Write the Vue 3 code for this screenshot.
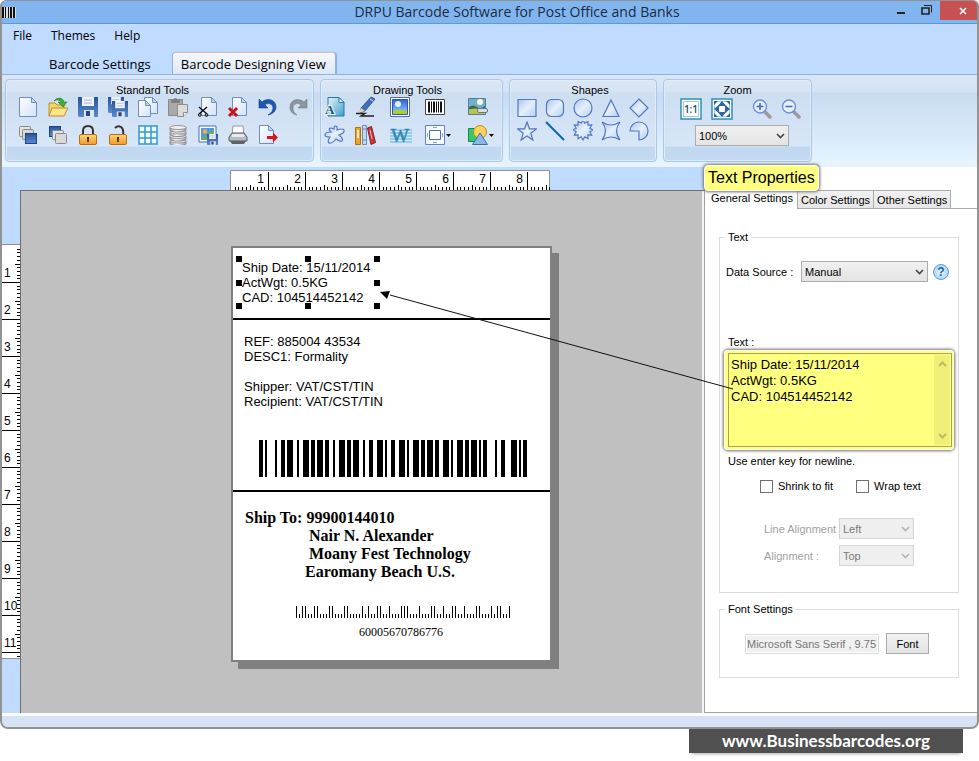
<script setup>
import { ref } from 'vue'

const page = (x, y, w, h) =>
  `<path d="M${x} ${y}h${w - 5}l5 5v${h - 5}h-${w}z" fill="url(#gPage)" stroke="#6f8fc0"/>` +
  `<path d="M${x + w - 5} ${y}v5h5z" fill="#c3d6f0" stroke="#6f8fc0" stroke-linejoin="round"/>`

const floppy = (x, y, s) =>
  `<g transform="translate(${x} ${y}) scale(${s / 20})"><path d="M0 0h20v20h-19l-1-1z" fill="url(#gBlue)"/>` +
  '<path d="M4 0h12v9h-12z" fill="#eef3fb"/><path d="M6 3h8M6 6h8" stroke="#a9b9d6"/>' +
  '<path d="M6 13h10v7h-10z" fill="#dfe5ef"/><path d="M8 14h4v5h-4z" fill="#24457e"/></g>'

const lockBody =
  '<rect x="1.500" y="9.500" width="17" height="10" rx="1.500" fill="url(#gGold)" stroke="#b86f10"/>' +
  '<path d="M10 12v5M9 13h2" stroke="#3a2200" stroke-width="1.600"/>'

const shapeStyle = 'fill="url(#gShape)" stroke="#5577bd" stroke-width="1.200"'

const standardTools = [
  { name: 'New', art: page(1.5, 0.5, 17, 19) },
  {
    name: 'Open',
    art:
      '<path d="M1 19V6h6l2 2h7v3" fill="#f3d469" stroke="#b8902c"/>' +
      '<path d="M1 19l3-8h16l-4 8z" fill="#ffe48a" stroke="#b8902c" stroke-linejoin="round"/>' +
      '<path d="M6 4c3-4 9-4 10 1h3l-4 5-5-5h3c-1-2-4-3-7-1z" fill="#3fae3a" stroke="#237d24" stroke-width=".6"/>',
  },
  { name: 'Save', art: floppy(0, 0, 20) },
  { name: 'Save all', art: floppy(0, 0, 16) + floppy(4, 4, 16) },
  { name: 'Copy', art: page(6.5, 0.5, 13, 16) + page(0.5, 3.5, 12, 16) },
  {
    name: 'Paste',
    art:
      '<path d="M.5 2.500h14v16h-14z" fill="#a9a9a9" stroke="#8a8a8a"/><path d="M3 3h2q2-4 5 0h2v3h-9z" fill="#7f7f7f"/>' +
      '<path d="M9.500 7.500h10v8l-4 4h-6z" fill="#dcdcdc" stroke="#8d8d8d"/><path d="M19.500 15.500h-4v4" fill="#f4f4f4" stroke="#8d8d8d"/>',
  },
  {
    name: 'Cut',
    art:
      page(3.5, 0.5, 15, 18) +
      '<path d="M1 10l8 7M9 10l-8 7" stroke="#111" stroke-width="1.400"/>' +
      '<circle cx="1.800" cy="18" r="1.400" fill="none" stroke="#111"/><circle cx="8.500" cy="18" r="1.400" fill="none" stroke="#111"/>',
  },
  { name: 'Delete', art: page(4.5, 0.5, 14, 18) + '<path d="M1 11l8 8M9 11l-8 8" stroke="#cc1417" stroke-width="3"/>' },
  {
    name: 'Undo',
    art: '<path d="M1 2v9h9l-3-3c3-3 8-1 8 3 0 3-2 5-5 7 5-1 8-4 8-8 0-7-8-10-14-5z" fill="#1f57b0" stroke="#123f8c" stroke-width=".6"/>',
  },
  {
    name: 'Redo',
    art: '<path d="M19 2v9h-9l3-3c-3-3-8-1-8 3 0 3 1 5 4 7-5-1-7-4-7-8 0-7 8-10 14-5z" fill="#8e959c" stroke="#777e86" stroke-width=".6"/>',
  },
  {
    name: 'Bring to front',
    art:
      '<rect x="1.500" y="1.500" width="11" height="10" rx="1" fill="#e3e3e3" stroke="#8a8a8a"/>' +
      '<rect x="4.500" y="4.500" width="11" height="10" rx="1" fill="#d6d6d6" stroke="#8a8a8a"/>' +
      '<rect x="7.500" y="8.500" width="11" height="10" fill="url(#gBlue)" stroke="#1d4585"/>',
  },
  {
    name: 'Send to back',
    art:
      '<rect x="1.500" y="1.500" width="11" height="10" fill="url(#gBlue)" stroke="#1d4585"/>' +
      '<rect x="4.500" y="5.500" width="11" height="9" rx="1" fill="#e3e3e3" stroke="#8a8a8a"/>' +
      '<rect x="7.500" y="8.500" width="11" height="10" rx="1" fill="#d9d9d9" stroke="#8a8a8a"/>',
  },
  { name: 'Lock', art: '<path d="M5 10V6q0-5 5-5t5 5v4" fill="none" stroke="#333" stroke-width="2"/>' + lockBody },
  { name: 'Unlock', art: '<path d="M7 3q3-3 6-1 3 2 2 8" fill="none" stroke="#333" stroke-width="2"/>' + lockBody },
  {
    name: 'Grid',
    art:
      '<path d="M1 1h18v18h-18z" fill="#f2fbff" stroke="#2e9bc9" stroke-width="1.500"/>' +
      '<path d="M7 1v18M13 1v18M1 7h18M1 13h18" stroke="#2e9bc9" stroke-width="1.500"/>',
  },
  {
    name: 'Database',
    art: [14, 9.5, 5, 0.5]
      .map(
        (y) =>
          `<path d="M2 ${y + 2}v2.500q0 2 8 2t8-2v-2.500" fill="url(#gSilver)" stroke="#8b8b93"/>` +
          `<ellipse cx="10" cy="${y + 2}" rx="8" ry="2" fill="#f2eef2" stroke="#99959c"/>`
      )
      .join(''),
  },
  {
    name: 'Save image',
    art:
      '<path d="M1 1h17v16h-17z" fill="#fff" stroke="#3f6fb5"/><path d="M3 3h13v12h-13z" fill="#4d9be8"/>' +
      '<circle cx="7" cy="6.500" r="2.200" fill="#ffa92e"/><path d="M3 15q4-6 8-3v3zM11 6q3 1 5 0v5h-5z" fill="#6fb636"/>' +
      floppy(9, 9, 11),
  },
  {
    name: 'Print',
    art:
      '<path d="M5 1h10l1 9h-12z" fill="#fff" stroke="#999"/><path d="M1 12l3-4h12l3 4v4h-18z" fill="#b8bcc2" stroke="#555b63"/>' +
      '<path d="M4 9h12v3h-12z" fill="#e7eaee"/><path d="M2 16h16l-2 3h-12z" fill="#5e646c"/>',
  },
  { name: 'Export', art: page(1.5, 0.5, 14, 18) + '<path d="M9 11h6V7.500l5 5-5 5V14h-6z" fill="#d8161a"/>' },
]

const drawingTools = [
  {
    name: 'Text',
    art:
      '<path d="M3 .5h11l5 5v13.500h-16z" fill="url(#gTeal)" stroke="#28789f"/><path d="M14 .5v5h5z" fill="#e9f6fc" stroke="#28789f"/>' +
      '<text x="0" y="17" font-family="Liberation Serif, serif" font-size="13" font-weight="700" fill="#17506f" stroke="#eaf6fb" stroke-width="2" paint-order="stroke">A</text>',
  },
  {
    name: 'Pencil',
    art:
      '<path d="M16 0l4 2-10 12-5 2 1-5z" fill="#3e6fba" stroke="#22427c" stroke-width=".7"/><path d="M15 2l3 2" stroke="#dfe8f7"/>' +
      '<path d="M6 11l-2 5 6-2z" fill="#e9d2a5"/><path d="M1 16.500h9l-4 2.500h13" fill="none" stroke="#222" stroke-width="1.400"/>',
  },
  {
    name: 'Picture',
    art:
      '<path d="M.5.5h19v19h-19z" fill="#fff" stroke="#5a68b3"/><path d="M2.500 2.500h15v15h-15z" fill="url(#gSky)" stroke="#2f57a8"/>' +
      '<circle cx="8" cy="7" r="3" fill="#fff" opacity=".85"/><path d="M3 14q6-3 14 0v3h-14z" fill="#a9cf35"/>',
  },
  {
    name: 'Barcode',
    art:
      '<path d="M.5 2.500h19v15h-19z" fill="#fff" stroke="#444"/>' +
      '<path d="M3 4.500h2v11h-2zM6 4.500h1v11h-1zM8 4.500h2v11h-2zM11 4.500h1v11h-1zM13 4.500h1v11h-1zM15 4.500h2v11h-2z" fill="#111"/>',
  },
  {
    name: 'Image library',
    art:
      '<path d="M.5 1.500h17v16h-17z" fill="#6fb0cf" stroke="#4d7f9c"/><circle cx="12" cy="5" r="3" fill="#fff7cf"/>' +
      '<path d="M1 10q5-3 8 0t8-1v3H1z" fill="#3d6c3e"/><path d="M1 13q5-3 16 0v4H1z" fill="#b6c64c"/>' +
      '<rect x="9.500" y="11.500" width="10" height="4" rx="1.500" fill="#d9dde6" stroke="#6c7487"/>',
  },
  {
    name: 'Freeform',
    art: '<path d="M10 1q3 0 2 4 6-2 7 0 1 3-5 5 5 4 3 6-2 1-6-2-4 5-7 4-2-2 1-6-5 0-5-2 0-3 6-3-3-3-1-4 2 0 4 1 0-3 1-3z" fill="url(#gShape)" stroke="#5577bd" stroke-width="1.200"/>',
  },
  {
    name: 'Library',
    art:
      '<path d="M.5 2.500h5v17h-5z" fill="#f2a325" stroke="#b36f0b"/><path d="M2 5h2v8h-2z" fill="#fff0c6"/>' +
      '<path d="M7.500.5h4v19h-4z" fill="#c4d5f0" stroke="#6c8cbe"/><path d="M8 4h3M8 15h3" stroke="#6c8cbe"/>' +
      '<path d="M12.500 3l4-1.500 4 16-4.500 2z" fill="#c8373a" stroke="#8d1b20"/><path d="M15 5l2 9" stroke="#f3b8b8"/>',
  },
  {
    name: 'Watermark',
    art:
      '<path d="M0 5h22M0 8h22M0 11h22M0 14h22M0 17h22" stroke="#55b5dc"/>' +
      '<text x="1" y="17" font-family="Liberation Serif, serif" font-size="19" fill="#2f86b4" stroke="#2f86b4" stroke-width=".5">W</text>',
  },
  {
    name: 'Page frame',
    caret: true,
    art:
      '<path d="M.5.500h19v19h-19z" fill="#f6faff" stroke="#5f83c2"/><path d="M4.500 5.500h11v9h-11z" fill="#fff" stroke="#4a70b4"/>' +
      '<path d="M8 2.500h4M8 17.500h4M2.500 8v4M17.500 8v4" stroke="#8aa3cf"/>',
  },
  {
    name: 'Insert shape',
    caret: true,
    art:
      '<path d="M.5 3.500h10v13h-10z" fill="#35c96f" stroke="#168a45"/><circle cx="12" cy="7" r="6.500" fill="#fbd25a" stroke="#bd8b1d"/>' +
      '<path d="M12 8l7.500 11.500h-15z" fill="#8ab7ea" stroke="#3a6db8"/>',
  },
]

const burst = (cx, cy, n, outer, inner) =>
  Array.from({ length: n * 2 }, (_, i) => {
    const r = i % 2 ? inner : outer
    const a = (Math.PI * i) / n - Math.PI / 2
    return `${(cx + r * Math.cos(a)).toFixed(1)},${(cy + r * Math.sin(a)).toFixed(1)}`
  }).join(' ')

const shapes = [
  { name: 'Rectangle', art: `<path d="M1 1.500h18v17h-18z" ${shapeStyle}/>` },
  { name: 'Rounded rectangle', art: `<rect x="1.500" y="1.500" width="17" height="17" rx="5" ${shapeStyle}/>` },
  { name: 'Ellipse', art: `<circle cx="10" cy="10" r="9" ${shapeStyle}/>` },
  { name: 'Triangle', art: `<path d="M10 2l8 16.500h-16z" ${shapeStyle}/>` },
  { name: 'Diamond', art: `<path d="M10 1l9 9-9 9-9-9z" ${shapeStyle}/>` },
  { name: 'Star', art: `<polygon points="${burst(10, 11, 5, 10, 4)}" ${shapeStyle}/>` },
  { name: 'Line', art: '<path d="M1 1l18 18" stroke="#0d66a6" stroke-width="2"/>' },
  { name: 'Burst', art: `<polygon points="${burst(10, 9, 12, 10, 7)}" ${shapeStyle}/>` },
  { name: 'Four point star', art: `<path d="M1 1q9 6 18 0-7 9 0 18-9-6-18 0 7-9 0-18z" ${shapeStyle}/>` },
  { name: 'Pie', art: `<path d="M1 10a9 9 0 1 1 9 9v-9z" ${shapeStyle}/>` },
]

const magnifier = (sign) =>
  '<g transform="translate(2 1)"><path d="M12 12l6 6" stroke="#9b9b9b" stroke-width="3.500" stroke-linecap="round"/>' +
  '<circle cx="8" cy="7.500" r="6.500" fill="#e6eefc" stroke="#6c8fd6" stroke-width="1.400"/>' +
  `<path d="${sign}" stroke="#3f6dc4" stroke-width="1.600"/></g>`

const zoomTools = [
  {
    name: 'Actual size',
    art:
      '<path d="M1 1h20v20h-20z" fill="#fff" stroke="#2f8fb9" stroke-width="1.500"/><path d="M3.500 3.500h15v15h-15z" fill="#fff" stroke="#7fc1dd" stroke-width=".8"/>' +
      '<text x="11" y="15" text-anchor="middle" font-family="Open Sans, sans-serif" font-size="10" font-weight="600" fill="#1d4e6e">1:1</text>',
  },
  {
    name: 'Fit to window',
    art:
      '<path d="M1 1h20v20h-20z" fill="#fff" stroke="#2f8fb9" stroke-width="1.500"/><path d="M3.500 3.500h15v15h-15z" fill="#fff" stroke="#7fc1dd" stroke-width=".8"/>' +
      '<path d="M3 3h4l-4 4zM19 3h-4l4 4zM3 19h4l-4-4zM19 19h-4l4-4z" fill="#2d62ad"/>' +
      '<path d="M11 3l3 3.500 1.500 1.500 3.500 3-3.500 3-1.500 1.500-3 3.500-3-3.500-1.500-1.500-3.500-3 3.500-3 1.500-1.500z" fill="#2d62ad"/><rect x="8" y="8" width="6" height="6" rx="1" fill="#fff"/>',
  },
  { name: 'Zoom in', art: magnifier('M8 4v7M4.500 7.500h7') },
  { name: 'Zoom out', art: magnifier('M4.500 7.500h7') },
]

/* Bars of the linear code as [start, width] in 2px modules */
const bars = [
  [0, 2], [3, 1], [8, 1], [11, 2], [14, 3], [19, 1], [22, 3], [26, 2], [29, 3], [33, 2],
  [37, 1], [40, 3], [44, 2], [47, 3], [52, 1], [55, 2], [59, 3], [63, 1], [66, 2], [70, 3],
  [74, 1], [77, 3], [81, 2], [84, 3], [88, 2], [92, 3], [96, 1], [99, 3], [103, 2], [106, 3],
  [110, 1], [112, 2], [118, 1], [121, 2], [126, 3], [130, 1], [132, 2],
]

/* POSTNET: a tall frame bar, five bars per digit, a tall frame bar */
const postnetDigits = ['11000', '00011', '00101', '00110', '01001', '01010', '01100', '10001', '10010', '10100']
const postalCode = '60005670786776'
const postnet = ('1' + [...postalCode].map((d) => postnetDigits[d]).join('') + '1').split('')

const unit = 37
const ticks = (count) =>
  Array.from({ length: count }, (_, i) => i + 1).map((i) => ({
    at: Math.round((i * unit) / 10),
    size: i % 10 === 0 ? 18 : i % 5 === 0 ? 5 : 3,
  }))
const topTicks = ticks(86)
const sideTicks = ticks(111)

const shipTo = `Ship To: 99900144010
                Nair N. Alexander
                Moany Fest Technology
               Earomany Beach U.S.`

const activeView = ref('Barcode Designing View')
const activePanel = ref('General Settings')
const zoom = ref('100%')
const source = ref('Manual')
const labelText = ref('Ship Date: 15/11/2014\nActWgt: 0.5KG\nCAD: 104514452142')
const shrink = ref(false)
const wrap = ref(false)
</script>

<template>
  <div class="shell">
    <svg class="defs" width="0" height="0" aria-hidden="true">
      <defs>
        <linearGradient id="gPage" x1="0" y1="0" x2="1" y2="1"><stop offset="0" stop-color="#fff" /><stop offset="1" stop-color="#d3e2f7" /></linearGradient>
        <linearGradient id="gBlue" x1="0" y1="0" x2="0" y2="1"><stop offset="0" stop-color="#27539c" /><stop offset="1" stop-color="#5b8bcb" /></linearGradient>
        <linearGradient id="gGold" x1="0" y1="0" x2="0" y2="1"><stop offset="0" stop-color="#ffd27a" /><stop offset="1" stop-color="#f39a26" /></linearGradient>
        <linearGradient id="gSilver" x1="0" y1="0" x2="1" y2="0"><stop offset="0" stop-color="#9d9da5" /><stop offset=".4" stop-color="#fff" /><stop offset="1" stop-color="#a29da5" /></linearGradient>
        <linearGradient id="gTeal" x1="0" y1="0" x2="1" y2="1"><stop offset="0" stop-color="#e4f5fc" /><stop offset="1" stop-color="#3f9fc9" /></linearGradient>
        <linearGradient id="gSky" x1="0" y1="0" x2="0" y2="1"><stop offset="0" stop-color="#2765d8" /><stop offset="1" stop-color="#9fd2ff" /></linearGradient>
        <linearGradient id="gShape" x1="0" y1="0" x2="1" y2="1"><stop offset="0" stop-color="#a9c5ee" /><stop offset=".5" stop-color="#e6effb" /><stop offset="1" stop-color="#b3cdf0" /></linearGradient>
      </defs>
    </svg>

    <main class="window">
      <header class="titlebar">
        <svg class="app-icon" width="14" height="11" viewBox="0 0 14 11" aria-hidden="true">
          <path d="M0 0h14v11h-14z" fill="#ddd" />
          <path d="M0 0h2v11h-2zM3 0h1v11h-1zM6 0h1v11h-1zM8 0h2v11h-2zM11 0h2v11h-2z" fill="#111" />
        </svg>
        <h1>DRPU Barcode Software for Post Office and Banks</h1>
        <div class="controls">
          <button type="button" aria-label="Minimize"><svg width="10" height="12" viewBox="0 0 10 12"><path d="M1 9h8" stroke="#222" stroke-width="2" /></svg></button>
          <button type="button" aria-label="Restore"><svg width="12" height="12" viewBox="0 0 12 12"><path d="M1 4h7v6h-7z" fill="none" stroke="#222" stroke-width="1.600" /><path d="M3 1.500h7.500v7" fill="none" stroke="#222" /></svg></button>
          <button type="button" class="close" aria-label="Close"><svg width="8" height="8" viewBox="0 0 8 8"><path d="M1 1l6 6M7 1l-6 6" stroke="#fff" stroke-width="1.600" /></svg></button>
        </div>
      </header>

      <nav class="menu">
        <button type="button">File</button>
        <button type="button">Themes</button>
        <button type="button">Help</button>
      </nav>

      <nav class="views">
        <button
          v-for="view in ['Barcode Settings', 'Barcode Designing View']"
          :key="view"
          type="button"
          :class="{ active: view === activeView }"
          @click="activeView = view"
        >{{ view }}</button>
      </nav>

      <section class="ribbon">
        <div class="group standard">
          <h2>Standard Tools</h2>
          <div class="tools">
            <button v-for="t in standardTools" :key="t.name" type="button" :aria-label="t.name">
              <svg width="20" height="20" viewBox="0 0 20 20" v-html="t.art"></svg>
            </button>
          </div>
        </div>
        <div class="group drawing">
          <h2>Drawing Tools</h2>
          <div class="tools">
            <button v-for="t in drawingTools" :key="t.name" type="button" :aria-label="t.name">
              <svg class="glyph" width="20" height="20" viewBox="0 0 20 20" v-html="t.art"></svg>
              <svg v-if="t.caret" width="5" height="3" viewBox="0 0 5 3"><path d="M0 0h5l-2.500 3z" fill="#000" /></svg>
            </button>
          </div>
        </div>
        <div class="group shapes">
          <h2>Shapes</h2>
          <div class="tools">
            <button v-for="t in shapes" :key="t.name" type="button" :aria-label="t.name">
              <svg width="20" height="20" viewBox="0 0 20 20" v-html="t.art"></svg>
            </button>
          </div>
        </div>
        <div class="group zooming">
          <h2>Zoom</h2>
          <div class="tools">
            <button v-for="t in zoomTools" :key="t.name" type="button" :aria-label="t.name">
              <svg width="22" height="22" viewBox="0 0 22 22" v-html="t.art"></svg>
            </button>
          </div>
          <span class="select zoom-select">
            <select v-model="zoom" aria-label="Zoom level"><option>100%</option></select>
            <svg width="9" height="6" viewBox="0 0 9 6"><path d="M1 1l3.500 3.500 3.500-3.500" /></svg>
          </span>
        </div>
      </section>

      <section class="workspace">
        <svg class="ruler ruler-top" width="320" height="20" viewBox="0 0 320 20" aria-hidden="true">
          <path class="edge" d="M.5 20V.5h319V20" />
          <path v-for="t in topTicks" :key="t.at" :d="`M${t.at + 1.5} 20v-${t.size}`" />
          <text v-for="n in 8" :key="n" :x="n * unit - 3" y="13" text-anchor="end">{{ n }}</text>
        </svg>
        <svg class="ruler ruler-side" width="18" height="415" viewBox="0 0 18 415" aria-hidden="true">
          <path class="edge" d="M0 .5h18M0 414.500h18" />
          <path v-for="t in sideTicks" :key="t.at" :d="`M18 ${t.at + 1.5}h-${t.size}`" />
          <text v-for="n in 11" :key="n" x="2" :y="n * unit - 4">{{ n }}</text>
        </svg>

        <div class="canvas">
          <article class="label">
            <div class="block first">
              <div class="selection">
                <p>{{ labelText }}</p>
                <i v-for="h in ['tl', 'tc', 'tr', 'ml', 'mr', 'bl', 'bc', 'br']" :key="h" :class="['handle', h]"></i>
              </div>
            </div>
            <div class="block second">
              <p>REF: 885004 43534<br />DESC1: Formality<br /><br />Shipper: VAT/CST/TIN<br />Recipient: VAT/CST/TIN</p>
              <svg class="code" width="268" height="37" viewBox="0 0 268 37" shape-rendering="crispEdges" aria-hidden="true">
                <rect v-for="b in bars" :key="b[0]" :x="b[0] * 2" y="0" :width="b[1] * 2" height="37" />
              </svg>
            </div>
            <div class="block third">
              <p class="address">{{ shipTo }}</p>
              <svg class="postnet" width="214" height="12" viewBox="0 0 214 12" shape-rendering="crispEdges" aria-hidden="true">
                <rect v-for="(b, i) in postnet" :key="i" :x="i * 3" :y="b === '1' ? 0 : 8" width="1" :height="b === '1' ? 12 : 4" />
              </svg>
              <p class="postal">{{ postalCode }}</p>
            </div>
          </article>
        </div>

        <aside class="panel">
          <div class="panel-tabs">
            <button
              v-for="tab in ['General Settings', 'Color Settings', 'Other Settings']"
              :key="tab"
              type="button"
              :class="{ active: tab === activePanel }"
              @click="activePanel = tab"
            >{{ tab }}</button>
            <span class="rest"></span>
          </div>

          <fieldset>
            <legend>Text</legend>
            <div class="row source">
              <label for="source">Data Source :</label>
              <span class="select">
                <select id="source" v-model="source"><option>Manual</option></select>
                <svg width="9" height="6" viewBox="0 0 9 6"><path d="M1 1l3.500 3.500 3.500-3.500" /></svg>
              </span>
              <button type="button" class="help" aria-label="Help about data sources">?</button>
            </div>
            <label class="text-label" for="text">Text :</label>
            <div class="highlight">
              <textarea id="text" v-model="labelText"></textarea>
              <span class="scroll">
                <svg width="9" height="6" viewBox="0 0 9 6"><path d="M1 5l3.500-3.500 3.500 3.500" /></svg>
                <svg width="9" height="6" viewBox="0 0 9 6"><path d="M1 1l3.500 3.500 3.500-3.500" /></svg>
              </span>
            </div>
            <p class="hint">Use enter key for newline.</p>
            <div class="checks">
              <label><input v-model="shrink" type="checkbox" />Shrink to fit</label>
              <label><input v-model="wrap" type="checkbox" />Wrap text</label>
            </div>
            <div class="align">
              <label for="line-align">Line Alignment</label>
              <span class="select">
                <select id="line-align" disabled><option>Left</option></select>
                <svg width="9" height="6" viewBox="0 0 9 6"><path d="M1 1l3.500 3.500 3.500-3.500" /></svg>
              </span>
              <label for="alignment">Alignment :</label>
              <span class="select">
                <select id="alignment" disabled><option>Top</option></select>
                <svg width="9" height="6" viewBox="0 0 9 6"><path d="M1 1l3.500 3.500 3.500-3.500" /></svg>
              </span>
            </div>
          </fieldset>

          <fieldset class="font-box">
            <legend>Font Settings</legend>
            <div class="row font-row">
              <input type="text" value="Microsoft Sans Serif , 9.75" aria-label="Current font" disabled />
              <button type="button">Font</button>
            </div>
          </fieldset>
          <strong class="callout">Text Properties</strong>
          <svg class="pointer" width="356" height="102" viewBox="0 0 356 102" aria-hidden="true">
            <path d="M353 99L10 5" stroke="#111" />
            <path d="M0 2l10-1-3 8z" fill="#000" />
          </svg>
        </aside>
      </section>

      <footer class="status"></footer>
    </main>

    <div class="brand"><a href="#">www.Businessbarcodes.org</a></div>
  </div>
</template>

<style>
body {
  margin: 0;
  background: #fff;
}
</style>

<style scoped>
.shell {
  display: flex;
  flex-direction: column;
  min-height: 100vh;
  box-sizing: border-box;
  font: 11px/14px "Liberation Sans", Arial, sans-serif;
  color: #000;
}
.shell * {
  box-sizing: border-box;
}
.defs {
  position: absolute;
}
button,
select,
input,
textarea {
  margin: 0;
  padding: 0;
  border: 0;
  border-radius: 0;
  background: none;
  font: inherit;
  color: inherit;
}
h1,
h2,
p {
  margin: 0;
  font-weight: 400;
}
.window {
  flex: 1;
  display: flex;
  flex-direction: column;
  border: 2px solid #929292;
  border-top-width: 1px;
  border-radius: 6px 6px 8px 8px;
  background: #bfdbff;
  overflow: hidden;
}

.titlebar {
  display: grid;
  grid-template-columns: 144px 1fr auto;
  height: 23px;
  background: #81b5f0;
  border-bottom: 1px solid #6397d3;
}
.app-icon {
  margin-top: 6px;
}
h1 {
  font: 14px/22px "Open Sans", "Noto Sans", sans-serif;
  text-align: center;
  color: #1d2b3d;
}
.controls {
  display: flex;
}
.controls button {
  display: flex;
  width: 26px;
  height: 19px;
  padding-top: 3px;
  justify-content: center;
}
.controls .close {
  width: 37px;
  padding: 6px 0 0 8px;
  background: #c75050;
}

.menu {
  display: flex;
  gap: 19px;
  height: 24px;
  padding-left: 11px;
  font: 12px/24px "Open Sans", "Noto Sans", sans-serif;
}
.views {
  display: flex;
  gap: 12px;
  height: 26px;
  padding: 4px 0 0 38px;
  font: 13px/22px "Open Sans", "Noto Sans", sans-serif;
}
.views button {
  height: 23px;
  padding: 0 9px;
}
.views .active {
  padding: 0 9px 0 8px;
  border: 1px solid #8db2e3;
  border-top-color: #d8bcae;
  border-bottom: 0;
  border-radius: 4px 4px 0 0;
  background: linear-gradient(#f5f8fd, #dce7f5);
  box-shadow: 1px 0 1px #8fa9cc;
}

.ribbon {
  display: flex;
  gap: 6px;
  padding: 4px 3px 5px;
  border-top: 1px solid #8db2e3;
  background: linear-gradient(#dbe6f4, #d3e2f4 17px, #c8dbf1 18px, #e7f5ff);
}
.group {
  height: 83px;
  padding: 3px 0 0;
  border: 1px solid #a9c7ec;
  border-radius: 4px;
  background: linear-gradient(#dce7f5, #d6e3f3 12px, #cddef1 13px, #d7e6f7 66px, #c1d8f1 67px, #c4daf2);
  box-shadow: inset 0 0 0 1px #dfebf8;
}
h2 {
  font-size: 11px;
  line-height: 14px;
  text-align: center;
}
.standard h2 {
  padding-right: 14px;
}
.drawing h2 {
  padding-right: 8px;
}
.tools {
  display: grid;
}
.tools button {
  display: flex;
  align-items: center;
  gap: 1px;
  height: 20px;
}
.tools svg {
  flex: none;
}
.tools .glyph {
  overflow: visible;
}
.standard {
  width: 309px;
}
.standard .tools {
  grid-template-columns: repeat(10, 30px);
  row-gap: 8px;
  padding-left: 12px;
}
.drawing {
  width: 183px;
}
.drawing .tools {
  grid-template-columns: 30px 35px 35px 43px 27px;
  row-gap: 8px;
  padding-left: 4px;
}
.shapes {
  width: 148px;
}
.shapes h2 {
  padding-left: 14px;
}
.shapes .tools {
  grid-template-columns: repeat(5, 28px);
  row-gap: 3px;
  padding: 1px 0 0 7px;
}
.zooming {
  width: 149px;
}
.zooming .tools {
  grid-template-columns: 31px 39px 29px 22px;
  padding: 1px 0 0 16px;
}
.zooming .tools button {
  height: 22px;
}

.select {
  display: grid;
  position: relative;
}
.select select {
  width: 100%;
  height: 21px;
  padding: 0 3px;
  appearance: none;
  border: 1px solid #acacac;
  background: linear-gradient(#f0f0f0, #e4e4e4);
}
.select svg {
  position: absolute;
  top: 8px;
  right: 4px;
  fill: none;
  stroke: #444;
  stroke-width: 1.6;
  pointer-events: none;
}
.select select:disabled {
  opacity: 1;
  color: #7b7b7b;
  border-color: #d4d4d4;
  background: #efefef;
}
.select select:disabled + svg {
  stroke: #b4b4b4;
}
.zoom-select {
  width: 94px;
  margin: 5px 0 0 31px;
}

.workspace {
  position: relative;
  flex: 1;
  display: grid;
  grid-template-columns: 18px 1fr 273px;
  grid-template-rows: 23px 1fr;
}
.ruler {
  background: #fff;
  font-size: 12px;
}
.ruler path {
  stroke: #000;
}
.ruler .edge {
  fill: none;
  stroke: #909090;
}
.ruler-top {
  grid-area: 1 / 2;
  align-self: end;
  margin-left: 210px;
}
.ruler-side {
  grid-area: 2 / 1;
  margin-top: 54px;
}
.canvas {
  grid-area: 2 / 2;
  padding: 55px 0 44px 210px;
  border: solid #6e6e6e;
  border-width: 1px 0 0 1px;
  box-shadow: inset -2px 0 #f4f4f4;
  background: #c0c0c0;
}
.label {
  display: flex;
  flex-direction: column;
  width: 321px;
  border: 2px solid #808080;
  box-shadow: 7px 7px 0 #808080;
  background: #fff;
  font-size: 13px;
  line-height: 15px;
}
.block {
  border-bottom: 2px solid #000;
}
.first {
  height: 72px;
  padding: 11px 0 0 6px;
}
.selection {
  position: relative;
  width: 138px;
  height: 47px;
  padding: 1px 0 0 3px;
  white-space: pre;
}
.handle {
  position: absolute;
  width: 6px;
  height: 6px;
  margin: -3px;
  background: #000;
}
.tl, .ml, .bl { left: 0; }
.tc, .bc { left: 50%; }
.tr, .mr, .br { left: 100%; }
.tl, .tc, .tr { top: 0; }
.ml, .mr { top: 50%; }
.bl, .bc, .br { top: 100%; }
.second {
  height: 172px;
  padding: 14px 0 0 11px;
}
.code {
  display: block;
  margin: 31px 0 0 15px;
}
.third {
  height: 168px;
  padding: 17px 0 0 12px;
  border: 0;
}
.address {
  font: 700 16px/18px "Liberation Serif", "Times New Roman", serif;
  white-space: pre;
}
.postnet {
  display: block;
  margin: 25px 0 0 51px;
}
.postal {
  margin: 7px 0 0 114px;
  font: 12px/14px "Liberation Serif", "Times New Roman", serif;
}

.panel {
  grid-area: 1 / 3 / 3 / 3;
  position: relative;
  padding-top: 23px;
  border: solid #a0a0a0;
  border-width: 0 0 1px 1px;
  background: #fff;
}
.panel-tabs {
  display: flex;
}
.panel-tabs button {
  height: 19px;
  padding: 1px 3px 0;
  border: 1px solid #acacac;
  border-left-width: 0;
  background: linear-gradient(#f1f1f1, #e6e6e6);
  white-space: nowrap;
}
.panel-tabs .active {
  padding: 0 4px 3px 6px;
  border-width: 0 1px 0 0;
  background: #fff;
}
.rest {
  flex: 1;
  border-bottom: 1px solid #acacac;
}
fieldset {
  min-width: 0;
  margin: 21px 18px 0 14px;
  padding: 17px 0 26px;
  border: 1px solid #dcdcdc;
}
legend {
  margin-left: 5px;
  padding: 0 3px;
}
.row {
  display: flex;
  align-items: center;
}
.source {
  padding-left: 6px;
}
.source label {
  width: 75px;
}
.source .select {
  width: 127px;
}
.help {
  width: 16px;
  height: 16px;
  margin-left: 5px;
  border: 1px solid #5d9ad3;
  border-radius: 50%;
  background: radial-gradient(#e6f4ff, #9bcbf3);
  font-size: 12px;
  font-weight: 700;
  line-height: 14px;
  color: #1c66b0;
}
.text-label {
  display: block;
  margin: 53px 0 1px 8px;
}
.highlight {
  position: relative;
  width: 230px;
  height: 100px;
  margin-left: 4px;
  padding: 3px 2px 3px 4px;
  border-radius: 4px;
  background: #ffff80;
  box-shadow: inset 0 0 0 1px #fffff0, 0 0 3px 1px #707070;
}
.highlight textarea {
  display: block;
  width: 100%;
  height: 94px;
  padding: 3px 20px 3px 2px;
  border: 1px solid #a3a35c;
  outline: 0;
  font-size: 13px;
  line-height: 16px;
  resize: none;
  overflow: hidden;
}
.scroll {
  position: absolute;
  inset: 5px 4px 5px auto;
  display: flex;
  flex-direction: column;
  align-items: center;
  justify-content: space-between;
  width: 16px;
  padding: 6px 0;
  background: #f0f078;
}
.scroll path {
  fill: none;
  stroke: #bcbc62;
  stroke-width: 2;
}
.hint {
  margin: 4px 0 0 8px;
}
.checks {
  display: flex;
  gap: 23px;
  margin: 11px 0 25px 40px;
}
.checks label {
  display: flex;
  align-items: center;
  gap: 5px;
}
.checks input {
  width: 13px;
  height: 13px;
  appearance: none;
  border: 1px solid #707070;
  background: #fff;
}
.checks input:checked {
  background: #4a78b8;
}
.align {
  display: grid;
  grid-template-columns: 75px 75px;
  row-gap: 6px;
  align-items: center;
  margin-left: 44px;
  color: #a0a0a0;
}
.font-box {
  margin-top: 9px;
  padding-bottom: 23px;
}
.font-row {
  gap: 7px;
  padding-left: 25px;
}
.font-row input {
  width: 134px;
  height: 20px;
  padding: 0 1px;
  border: 1px solid #dadada;
  background: #f0f0f0;
  box-shadow: inset 0 0 0 1px #fff;
  color: #777;
}
.font-row button {
  width: 43px;
  height: 21px;
  border: 1px solid #acacac;
  background: linear-gradient(#f1f1f1, #e4e4e4);
}
.callout {
  position: absolute;
  top: -2px;
  left: -1px;
  padding: 0 3px;
  border: 1px solid #fffff0;
  border-radius: 4px;
  background: #ffff80;
  box-shadow: 0 0 3px 1px #707070;
  font-size: 16px;
  font-weight: 400;
  line-height: 24px;
  white-space: nowrap;
}
.pointer {
  position: absolute;
  top: 123px;
  left: -325px;
  pointer-events: none;
}
.status {
  height: 14px;
  border-top: 3px solid #f8fbff;
  background: #d7e3f4;
}

.brand {
  align-self: flex-end;
  height: 32px;
  padding-right: 16px;
}
.brand a {
  display: block;
  width: 274px;
  background: #505050;
  box-shadow: 0 4px 3px -3px #aaa;
  font: 700 17px/24px Lato, "Open Sans", sans-serif;
  text-align: center;
  text-decoration: none;
  color: #fff;
}
</style>
